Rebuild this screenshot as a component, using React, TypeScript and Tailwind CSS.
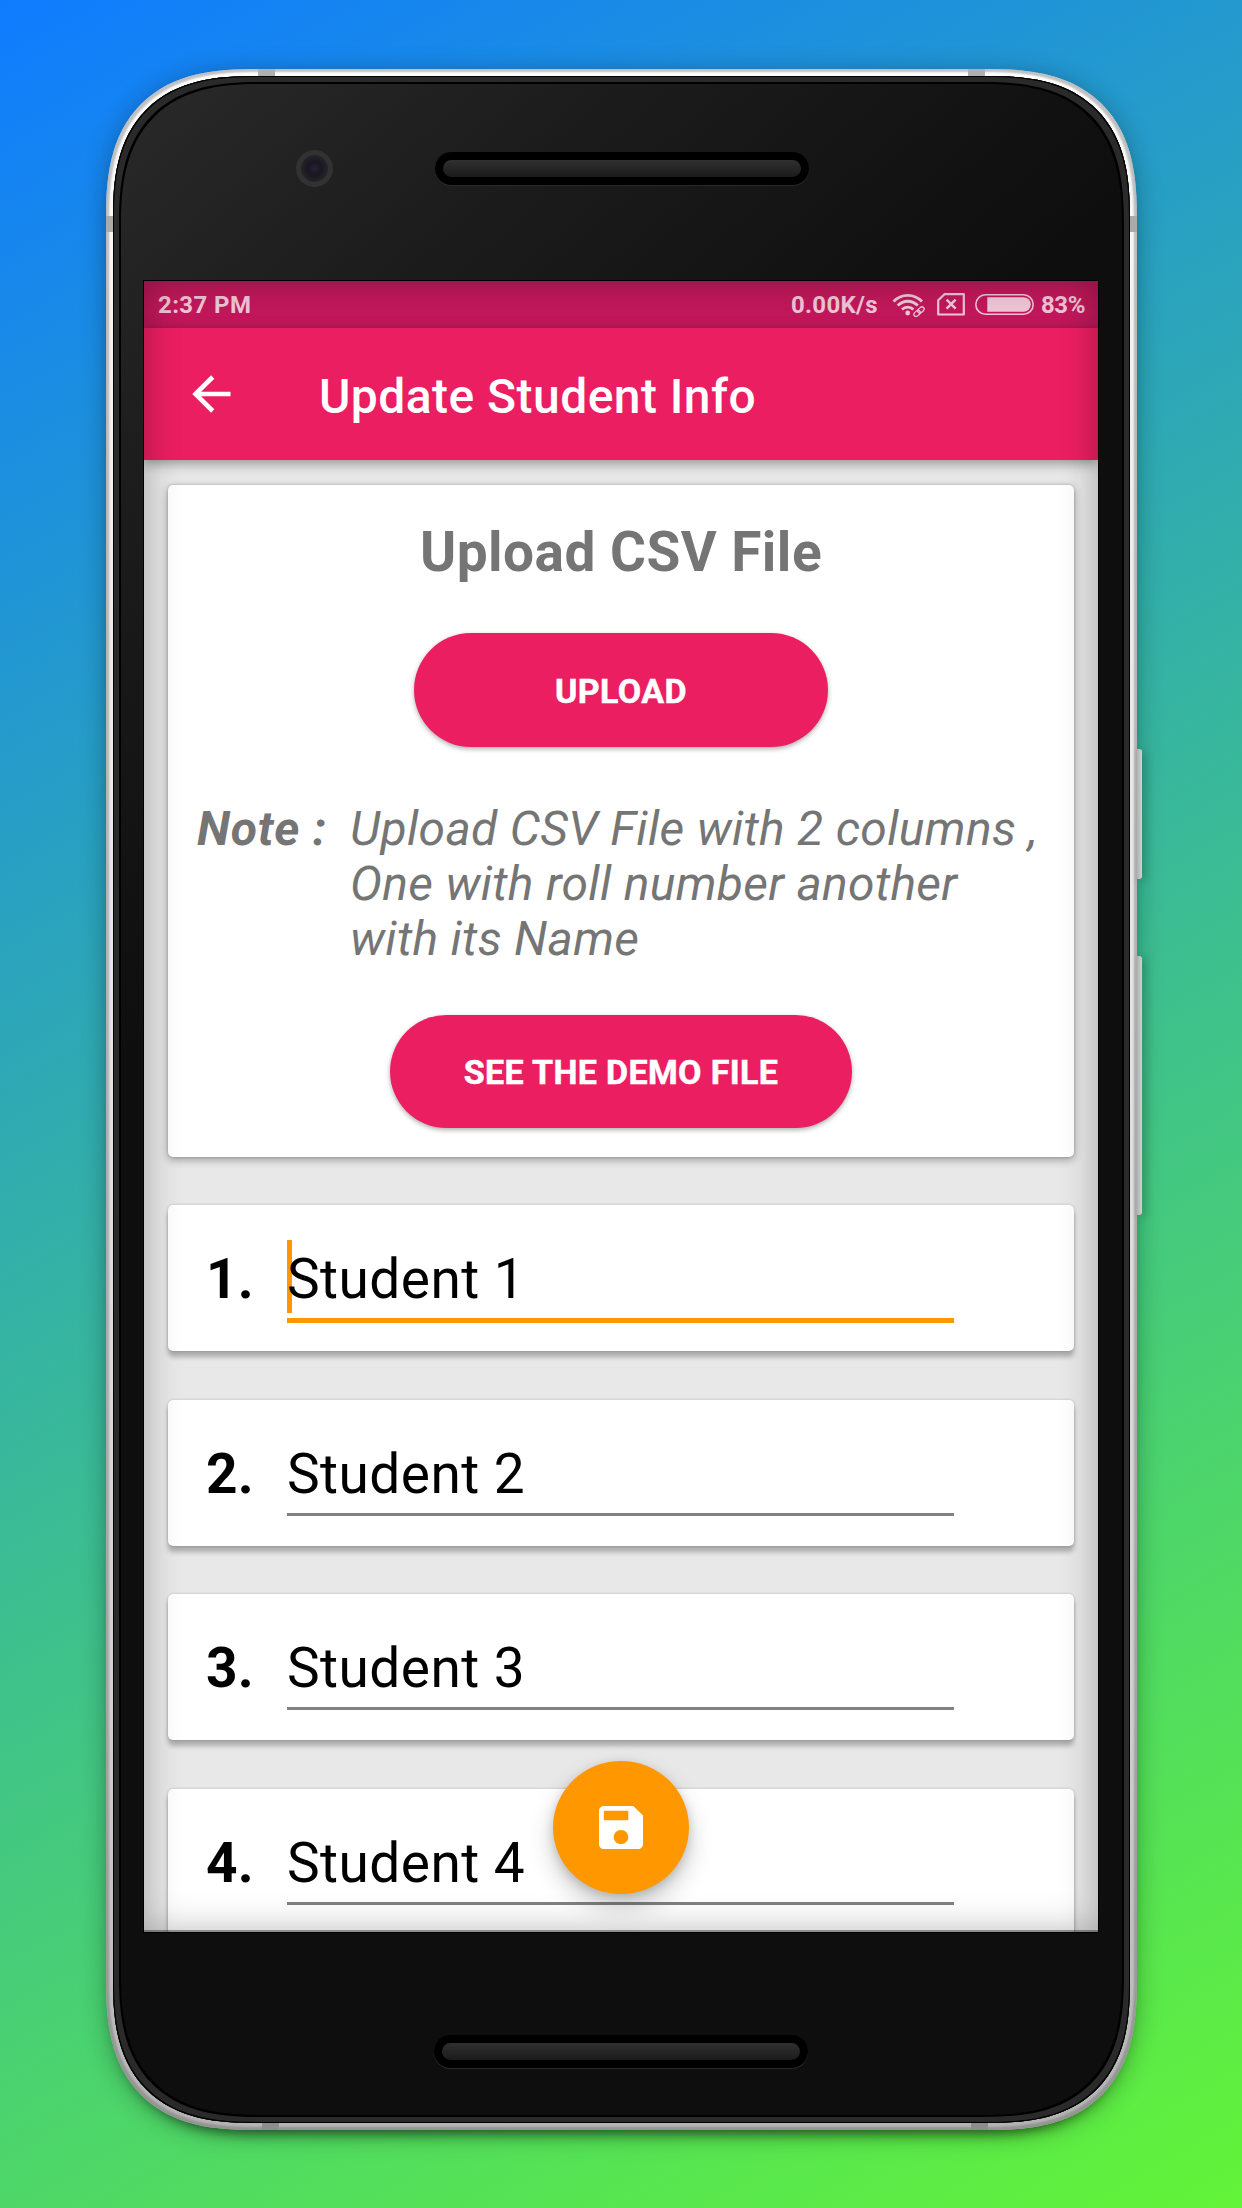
import React from "react";

const students = ["Student 1", "Student 2", "Student 3", "Student 4"];

function WifiIcon() {
  return (
    <svg width="34" height="24" viewBox="0 0 34 24" fill="none" stroke="currentColor">
      <path d="M1.5 8.5C9.5 0.3 22 0.3 30 8.5" strokeWidth="2.8" />
      <path d="M5.7 12.6C11.5 6.8 20 6.8 25.8 12.6" strokeWidth="2.8" />
      <path d="M10 16.6C13.2 13.4 18.2 13.4 21.4 16.6" strokeWidth="2.8" />
      <circle cx="15.7" cy="20" r="2.4" fill="currentColor" stroke="none" />
      <g strokeWidth="1.3" transform="rotate(-42 27 18.5)">
        <rect x="20.8" y="16.4" width="7" height="4.4" rx="2.2" />
        <rect x="26" y="16.4" width="7" height="4.4" rx="2.2" />
      </g>
    </svg>
  );
}

function NoSimIcon() {
  return (
    <svg width="28" height="23" viewBox="0 0 28 23" fill="none" stroke="currentColor">
      <path d="M7.5 1.2H26.8V21.5H1.2V7.2Z" strokeWidth="2.2" strokeLinejoin="round" />
      <path d="M9.6 6.6L18.6 15.6M18.6 6.6L9.6 15.6" strokeWidth="2.5" />
    </svg>
  );
}

function BatteryIcon() {
  return (
    <svg width="59" height="21" viewBox="0 0 59 21">
      <rect x="0.8" y="0.8" width="57.4" height="19.4" rx="9.7" fill="none" stroke="currentColor" strokeWidth="1.6" />
      <path d="M12.3 3.2H48.5A7.2 7.2 0 0 1 48.5 17.8H12.3Z" fill="currentColor" />
    </svg>
  );
}

function BackArrow() {
  return (
    <svg width="39" height="38" viewBox="0 0 39 38" fill="none" stroke="white" strokeWidth="4.6">
      <path d="M38.5 19H3.5" />
      <path d="M20.7 2L3.5 19L20.7 36" />
    </svg>
  );
}

function SaveIcon() {
  return (
    <svg width="44" height="43" viewBox="3 3 18 18" preserveAspectRatio="none" fill="white">
      <path d="M17 3H5c-1.11 0-2 .9-2 2v14c0 1.1.89 2 2 2h14c1.1 0 2-.9 2-2V7l-4-4zm-5 16c-1.66 0-3-1.34-3-3s1.34-3 3-3 3 1.34 3 3-1.34 3-3 3zm3-10H5V5h10v4z" />
    </svg>
  );
}

function SpeakerSlot() {
  return (
    <div className="h-[33px] w-[374px] rounded-full bg-black p-[8px] shadow-[0_1px_1px_#2c2c2c]">
      <div className="h-full w-full rounded-full bg-linear-to-b from-[#303030] to-[#1b1b1b]" />
    </div>
  );
}

function PinkButton({ label, className }: { label: string; className: string }) {
  return (
    <button
      className={
        "flex h-[113.5px] items-center justify-center rounded-full bg-[#eb1e62] pt-[2px] text-[34px] font-bold leading-none tracking-[0.35px] text-white shadow-[0_2px_5px_rgba(0,0,0,0.32)] [-webkit-text-stroke:0.5px_white] " +
        className
      }
    >
      {label}
    </button>
  );
}

function StudentRow({ index, name, focused }: { index: number; name: string; focused: boolean }) {
  return (
    <div className="flex h-[146px] shrink-0 rounded-[5px] bg-white pl-[38px] shadow-[0_6px_5px_rgba(0,0,0,0.26),0_0_3px_rgba(0,0,0,0.2)]">
      <div className="w-[81px] pt-[42px] text-[55px] font-bold leading-[65px] tracking-[0.3px] text-black">{index}.</div>
      <div
        className={
          "relative mt-[34px] w-[667px] whitespace-nowrap pt-[8px] text-[55px] leading-[65px] tracking-[0.45px] text-black " +
          (focused ? "h-[84px] border-b-[5px] border-[#ff9800]" : "h-[82px] border-b-[3px] border-[#828282]")
        }
      >
        {focused && <span className="absolute left-0 top-[1px] h-[73px] w-[5px] bg-[#ff9800]" />}
        <span className="relative">{name}</span>
      </div>
    </div>
  );
}

export default function App() {
  return (
    <div
      className="flex h-[2208px] w-[1242px] justify-center overflow-hidden bg-[linear-gradient(150.64deg,#0f7cff_0%,#62f438_100%)] pt-[69px]"
      style={{ fontFamily: 'Roboto, "Liberation Sans", sans-serif' }}
    >
      <div className="relative h-[2061px] w-[1031px] rounded-[126px] bg-[linear-gradient(180deg,#ffffff_0%,#f3f3f3_12%,#e4e4e4_45%,#cfcfcf_80%,#b4b4b4_100%)] p-[7px] shadow-[inset_0_0_2px_3px_rgba(100,100,100,0.4),0_4px_26px_rgba(0,0,0,0.3),0_12px_12px_-8px_rgba(0,0,0,0.5)] supports-[corner-shape:squircle]:rounded-[150px] supports-[corner-shape:squircle]:[corner-shape:superellipse(1.38)]">
        {/* antenna bands */}
        <span className="absolute left-[152px] top-0 h-[7px] w-[17px] bg-[#b0b0b0]" />
        <span className="absolute right-[152px] top-0 h-[7px] w-[17px] bg-[#b0b0b0]" />
        <span className="absolute bottom-0 left-[156px] h-[7px] w-[17px] bg-[#8d8d8d]" />
        <span className="absolute bottom-0 right-[149px] h-[7px] w-[17px] bg-[#8d8d8d]" />
        <span className="absolute left-0 top-[147px] h-[16px] w-[7px] bg-[#aaaaaa]" />
        <span className="absolute right-0 top-[147px] h-[16px] w-[7px] bg-[#aaaaaa]" />
        {/* side buttons */}
        <span className="absolute -right-[5px] top-[680px] h-[130px] w-[6px] rounded-r-[3px] bg-linear-to-r from-[#a9a9a9] to-[#d2d2d2] shadow-[4px_2px_8px_rgba(0,0,0,0.2)]" />
        <span className="absolute -right-[5px] top-[887px] h-[259px] w-[6px] rounded-r-[3px] bg-linear-to-r from-[#a9a9a9] to-[#d2d2d2] shadow-[4px_2px_8px_rgba(0,0,0,0.2)]" />

        <div className="flex h-full w-full flex-col items-center rounded-[119px] bg-[linear-gradient(139deg,#2a2a2a_0px,#1c1c1c_330px,#121212_620px,#0e0e0e_760px)] shadow-[inset_0_0_0_1px_#000,inset_0_0_0_6px_#2a2a2a,inset_0_0_0_8px_#000] supports-[corner-shape:squircle]:rounded-[143px] supports-[corner-shape:squircle]:[corner-shape:superellipse(1.38)]">
          <div className="flex h-[205px] w-full shrink-0 pl-[183px] pt-[74px]">
            <div className="flex h-[37px] w-[37px] items-center justify-center rounded-full bg-[#323232]">
              <div className="h-[27px] w-[27px] rounded-full bg-[radial-gradient(circle,#272238_0%,#19171f_35%,#25232a_70%,#131317_100%)]" />
            </div>
            <div className="ml-[102px] mt-[2px]">
              <SpeakerSlot />
            </div>
          </div>

          <div className="relative flex h-[1651px] w-[954px] shrink-0 flex-col overflow-hidden bg-[#e8e8e8] outline-1 outline-black">
            <div className="flex h-[47px] shrink-0 items-center bg-[#c2185b] pl-[14px] pr-[13px] text-[24px] font-bold leading-none tracking-[0.3px] text-[#f0c6d7]">
              <span className="grow pt-[1px] tracking-[0.4px]">2:37 PM</span>
              <span className="pt-[1px]">0.00K/s</span>
              <span className="ml-[14px]">
                <WifiIcon />
              </span>
              <span className="ml-[11px]">
                <NoSimIcon />
              </span>
              <span className="ml-[10px]">
                <BatteryIcon />
              </span>
              <span className="ml-[7px] pt-[1px] tracking-[-0.4px]">83%</span>
            </div>

            <header className="z-10 flex h-[132px] shrink-0 items-center bg-[#eb1e62] pl-[48px] shadow-[0_3px_12px_rgba(0,0,0,0.4)]">
              <BackArrow />
              <h1 className="ml-[88px] pt-[6px] text-[48px] font-medium leading-none tracking-[0.45px] text-white">
                Update Student Info
              </h1>
            </header>

            <main className="flex flex-col gap-[48.5px] px-[24px] pt-[25px]">
              <section className="flex h-[671.5px] shrink-0 flex-col items-center rounded-[5px] bg-white pt-[35px] shadow-[0_3px_8px_rgba(0,0,0,0.32),0_0_3px_rgba(0,0,0,0.2)]">
                <h2 className="text-[55px] font-bold leading-[64px] tracking-[0.45px] text-[#757575]">Upload CSV File</h2>
                <PinkButton label="UPLOAD" className="mt-[49px] w-[414px]" />
                <div className="mt-[54px] flex w-full pl-[29px] text-[48px] italic leading-[55px] tracking-[0.3px] text-[#757575]">
                  <span className="w-[153px] shrink-0 whitespace-nowrap font-bold tracking-[0.8px]">Note :</span>
                  <p className="whitespace-nowrap">
                    Upload CSV File with 2 columns ,
                    <br />
                    One with roll number another
                    <br />
                    with its Name
                  </p>
                </div>
                <PinkButton label="SEE THE DEMO FILE" className="mt-[49px] w-[462px]" />
              </section>
              {students.map((name, i) => (
                <StudentRow key={name} index={i + 1} name={name} focused={i === 0} />
              ))}
            </main>

            <button className="absolute left-[409px] top-[1480px] z-20 flex h-[133px] w-[136px] items-center justify-center rounded-[50%] bg-[#ff9800] shadow-[0_12px_24px_rgba(0,0,0,0.22),0_3px_10px_rgba(0,0,0,0.15)]">
              <SaveIcon />
            </button>
            <div className="pointer-events-none absolute inset-0 z-30 shadow-[inset_0_0_36px_rgba(0,0,0,0.3),inset_0_-2px_0_rgba(0,0,0,0.35)]" />
          </div>

          <div className="mt-[103px]">
            <SpeakerSlot />
          </div>
        </div>
      </div>
    </div>
  );
}
